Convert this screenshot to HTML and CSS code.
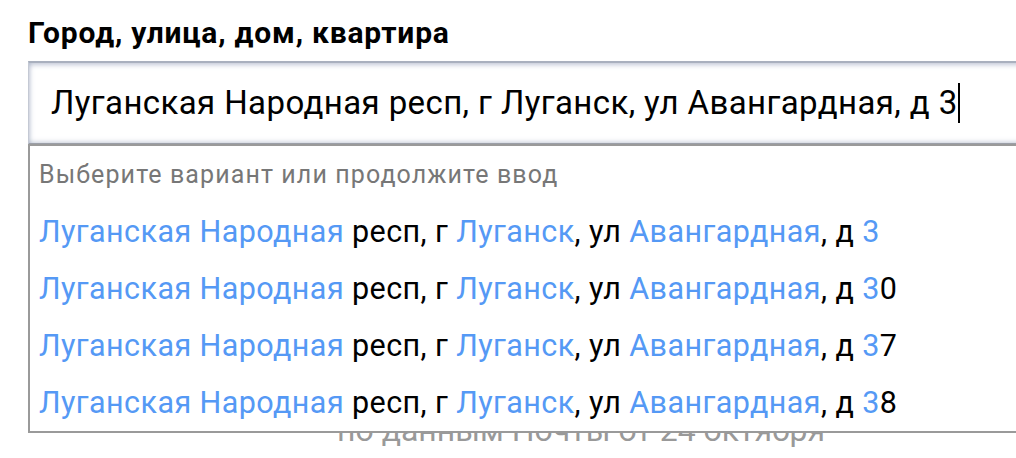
FILE: index.html
```html
<!DOCTYPE html>
<html lang="ru">
<head>
<meta charset="utf-8">
<link rel="stylesheet" href="styles.css">
</head>
<body>
<div class="page">
  <div class="label">Город, улица, дом, квартира</div>
  <div class="field">
    <div class="input"><span class="value">Луганская Народная респ, г Луганск, ул Авангардная, д 3</span><span class="caret"></span></div>
    <div class="dropdown">
      <div class="hint">Выберите вариант или продолжите ввод</div>
      <div class="item"><span class="hl">Луганская Народная</span> респ, г <span class="hl">Луганск</span>, ул <span class="hl">Авангардная</span>, д <span class="hl">3</span></div>
      <div class="item"><span class="hl">Луганская Народная</span> респ, г <span class="hl">Луганск</span>, ул <span class="hl">Авангардная</span>, д <span class="hl">3</span>0</div>
      <div class="item"><span class="hl">Луганская Народная</span> респ, г <span class="hl">Луганск</span>, ул <span class="hl">Авангардная</span>, д <span class="hl">3</span>7</div>
      <div class="item"><span class="hl">Луганская Народная</span> респ, г <span class="hl">Луганск</span>, ул <span class="hl">Авангардная</span>, д <span class="hl">3</span>8</div>
    </div>
  </div>
  <div class="note">по данным Почты от 24 октября</div>
</div>
</body>
</html>
```
FILE: styles.css
```css
html, body {
  margin: 0;
  padding: 0;
  background: #fff;
  overflow: hidden;
}
body {
  font-family: Roboto, "Noto Sans", sans-serif;
  color: #000;
  width: 1016px;
  height: 458px;
}
.page {
  padding: 15px 0 0 28px;
  width: 1106px;
}
.label {
  font-size: 30px;
  font-weight: 700;
  letter-spacing: 0.8px;
  line-height: 36px;
  height: 46px;
}
.field {
  position: relative;
  width: 1106px;
}
.input {
  box-sizing: border-box;
  height: 84px;
  border-top: 2px solid #a9b0be;
  border-left: 1px solid #c4c9d4;
  border-bottom: 2px solid #9b9fa8;
  box-shadow: inset 0 4px 5px -2px rgba(150,160,185,0.55), inset 4px 0 5px -3px rgba(150,160,185,0.5), inset 0 -4px 5px -3px rgba(150,160,185,0.5);
  padding: 0 0 0 22px;
  display: flex;
  align-items: center;
  font-size: 33px;
  letter-spacing: 0.4px;
  line-height: 40px;
}
.caret {
  display: inline-block;
  width: 2px;
  height: 40px;
  background: #000;
  margin-left: 0;
}
.dropdown {
  position: absolute;
  top: 83px;
  left: 0;
  right: 0;
  box-sizing: border-box;
  height: 289px;
  background: #fff;
  border: 2px solid #9a9a9a;
  border-right: none;
  padding: 12px 0 0 9px;
}
.hint {
  font-size: 25px;
  letter-spacing: 1.1px;
  line-height: 34px;
  color: #777;
  margin-bottom: 11px;
}
.item {
  font-size: 30.5px;
  letter-spacing: 0.42px;
  line-height: 57px;
  height: 57px;
  white-space: nowrap;
}
.hl {
  color: #5599f5;
}
.note {
  margin-top: 267px;
  text-align: center;
  font-size: 32px;
  color: #999;
  line-height: 36px;
}
```
